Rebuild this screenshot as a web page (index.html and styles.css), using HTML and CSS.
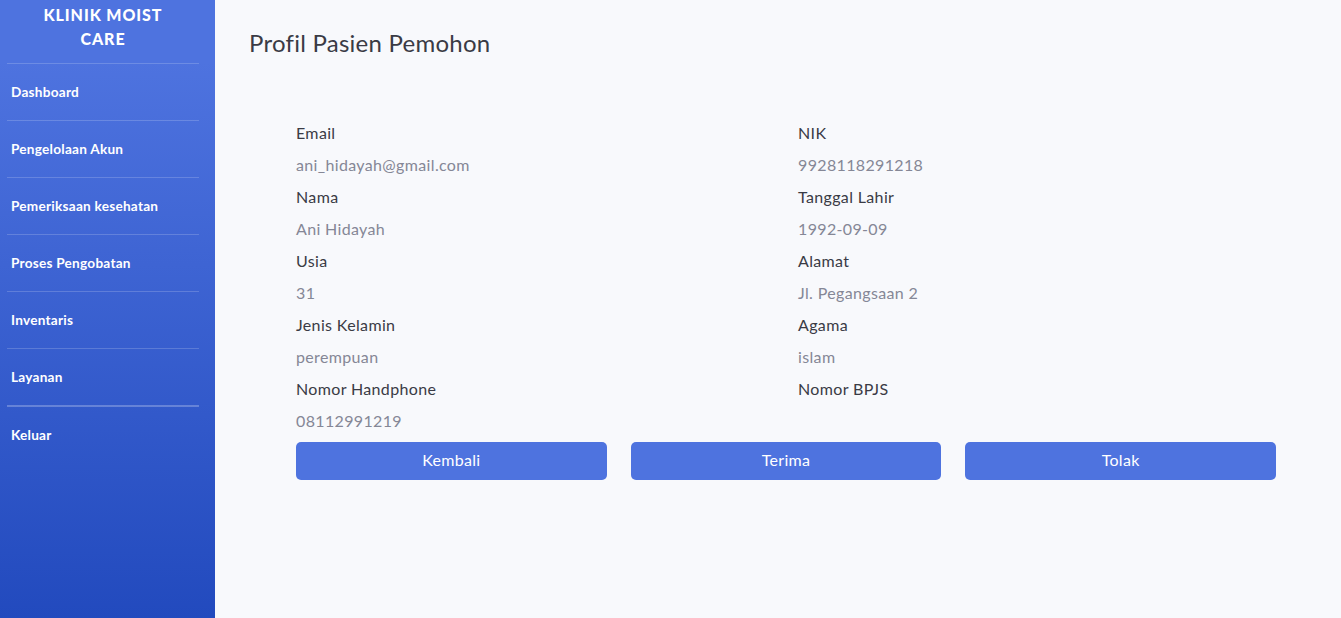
FILE: index.html
```html
<!DOCTYPE html>
<html lang="id">
<head>
<meta charset="utf-8">
<title>Profil Pasien Pemohon</title>
<link rel="stylesheet" href="styles.css">
</head>
<body>
<div class="wrapper">
  <aside class="sidebar">
    <div class="brand">KLINIK MOIST<br>CARE</div>
    <hr class="divider">
    <a class="nav-link" href="#">Dashboard</a>
    <hr class="divider">
    <a class="nav-link" href="#">Pengelolaan Akun</a>
    <hr class="divider">
    <a class="nav-link" href="#">Pemeriksaan kesehatan</a>
    <hr class="divider">
    <a class="nav-link" href="#">Proses Pengobatan</a>
    <hr class="divider">
    <a class="nav-link" href="#">Inventaris</a>
    <hr class="divider">
    <a class="nav-link" href="#">Layanan</a>
    <hr class="divider strong">
    <a class="nav-link" href="#">Keluar</a>
  </aside>
  <main class="content">
    <h1 class="page-title">Profil Pasien Pemohon</h1>
    <div class="profile">
      <div class="fields">
        <div class="col">
          <div class="label">Email</div>
          <div class="value">ani_hidayah@gmail.com</div>
          <div class="label">Nama</div>
          <div class="value">Ani Hidayah</div>
          <div class="label">Usia</div>
          <div class="value">31</div>
          <div class="label">Jenis Kelamin</div>
          <div class="value">perempuan</div>
          <div class="label">Nomor Handphone</div>
          <div class="value">08112991219</div>
        </div>
        <div class="col">
          <div class="label">NIK</div>
          <div class="value">9928118291218</div>
          <div class="label">Tanggal Lahir</div>
          <div class="value">1992-09-09</div>
          <div class="label">Alamat</div>
          <div class="value">Jl. Pegangsaan 2</div>
          <div class="label">Agama</div>
          <div class="value">islam</div>
          <div class="label">Nomor BPJS</div>
          <div class="value"></div>
        </div>
      </div>
      <div class="actions">
        <button class="btn">Kembali</button>
        <button class="btn">Terima</button>
        <button class="btn">Tolak</button>
      </div>
    </div>
  </main>
</div>
</body>
</html>
```

FILE: styles.css
```css
* { box-sizing: border-box; }
html, body { margin: 0; padding: 0; height: 100%; }
body {
  font-family: "Lato", "Noto Sans", sans-serif;
  background: #f8f9fc;
  color: #858796;
  font-size: 16px;
}
.wrapper {
  display: flex;
  min-height: 100vh;
}
.sidebar {
  width: 215px;
  flex: 0 0 215px;
  background: linear-gradient(180deg, #4e73df 10%, #224abe 100%);
  display: flex;
  flex-direction: column;
  padding: 0 16px 0 7px;
}
.brand {
  color: #fff;
  font-weight: 900;
  font-size: 16px;
  line-height: 24px;
  letter-spacing: 0.9px;
  text-align: center;
  padding: 3px 0 0 0;
  height: 63px;
}
.divider {
  margin: 0;
  border: 0;
  border-top: 1px solid rgba(255,255,255,0.18);
  height: 0;
}
.divider.strong {
  border-top: 2px solid rgba(255,255,255,0.25);
}
.nav-link {
  color: #fff;
  text-decoration: none;
  font-weight: 700;
  font-size: 13.6px;
  letter-spacing: 0.25px;
  height: 56px;
  display: flex;
  align-items: center;
  padding-left: 4px;
}
.content {
  flex: 1;
  padding: 26px 65px 0 34px;
}
.page-title {
  margin: 0;
  font-weight: 400;
  font-size: 24px;
  line-height: 34px;
  letter-spacing: 0.25px;
  color: #3a3b45;
}
.profile {
  margin: 57px 0 0 47px;
  width: 980px;
}
.fields {
  display: grid;
  grid-template-columns: 502px 1fr;
}
.label, .value {
  height: 32px;
  line-height: 32px;
  font-size: 16px;
  letter-spacing: 0.35px;
}
.label { color: #3a3b45; }
.value { color: #858796; }
.actions {
  display: grid;
  grid-template-columns: repeat(3, 1fr);
  gap: 24px;
  margin-top: 5px;
}
.btn {
  height: 38px;
  border: 0;
  border-radius: 5px;
  background: #4e73df;
  color: #fff;
  font-family: inherit;
  font-size: 16px;
  letter-spacing: 0.3px;
  line-height: 36px;
  padding: 0 0 2px;
  cursor: pointer;
}
```
